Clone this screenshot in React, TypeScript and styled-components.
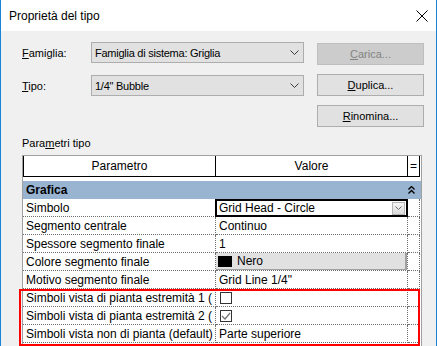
import styled, { createGlobalStyle } from "styled-components";

const GlobalStyle = createGlobalStyle`
  html, body {
    margin: 0;
    padding: 0;
    width: 437px;
    height: 346px;
    overflow: hidden;
    background: #ffffff;
  }
  body {
    font-family: "Liberation Sans", Arial, sans-serif;
    color: #000000;
  }
`;

type Param = {
  name: string;
  kind: "text" | "select" | "color" | "check";
  value?: string;
  checked?: boolean;
};

const params: Param[] = [
  { name: "Simbolo", kind: "select", value: "Grid Head - Circle" },
  { name: "Segmento centrale", kind: "text", value: "Continuo" },
  { name: "Spessore segmento finale", kind: "text", value: "1" },
  { name: "Colore segmento finale", kind: "color", value: "Nero" },
  { name: "Motivo segmento finale", kind: "text", value: "Grid Line 1/4\"" },
  { name: "Simboli vista di pianta estremità 1 (", kind: "check", checked: false },
  { name: "Simboli vista di pianta estremità 2 (", kind: "check", checked: true },
  { name: "Simboli vista non di pianta (default)", kind: "text", value: "Parte superiore" },
];

function Chevron() {
  return (
    <svg width="9" height="5" viewBox="0 0 9 5">
      <polyline points="0.5,0.5 4.5,4.5 8.5,0.5" fill="none" stroke="#3c3c3c" strokeWidth="1" />
    </svg>
  );
}

export default function App() {
  return (
    <>
      <GlobalStyle />
      <Window>
        <TitleBar>
          <Title>Proprietà del tipo</Title>
          <svg width="12" height="12" viewBox="0 0 12 12">
            <path d="M0.5 0.5 L11.5 11.5 M11.5 0.5 L0.5 11.5" stroke="#000" strokeWidth="1" />
          </svg>
        </TitleBar>
        <Body>
          <TopArea>
            <FieldColumn>
              <FieldRow>
                <FieldLabel>
                  <u>F</u>amiglia:
                </FieldLabel>
                <Combo>
                  <span>Famiglia di sistema: Griglia</span>
                  <Chevron />
                </Combo>
              </FieldRow>
              <FieldRow>
                <FieldLabel>
                  <u>T</u>ipo:
                </FieldLabel>
                <Combo>
                  <span>1/4" Bubble</span>
                  <Chevron />
                </Combo>
              </FieldRow>
            </FieldColumn>
            <ButtonColumn>
              <DialogButton $disabled>
                <u>C</u>arica...
              </DialogButton>
              <DialogButton>
                <u>D</u>uplica...
              </DialogButton>
              <DialogButton>
                <u>R</u>inomina...
              </DialogButton>
            </ButtonColumn>
          </TopArea>

          <SectionLabel>
            Para<u>m</u>etri tipo
          </SectionLabel>

          <Table>
            <HeaderRow>
              <HeaderCell>Parametro</HeaderCell>
              <HeaderCell>Valore</HeaderCell>
              <HeaderCell>=</HeaderCell>
            </HeaderRow>
            <GroupRow>
              <span>Grafica</span>
              <svg width="7" height="8" viewBox="0 0 7 8">
                <polyline points="0.5,3.5 3.5,0.5 6.5,3.5" fill="none" stroke="#000" strokeWidth="1.4" />
                <polyline points="0.5,7.5 3.5,4.5 6.5,7.5" fill="none" stroke="#000" strokeWidth="1.4" />
              </svg>
            </GroupRow>
            {params.map((p) => (
              <ParamRow key={p.name}>
                <NameCell>{p.name}</NameCell>
                <ValueCell>
                  {p.kind === "text" && <CellText>{p.value}</CellText>}
                  {p.kind === "select" && (
                    <SelectBox>
                      <span>{p.value}</span>
                      <DropButton>
                        <svg width="7" height="4" viewBox="0 0 7 4">
                          <polyline points="0.5,0.5 3.5,3.5 6.5,0.5" fill="none" stroke="#6e6e6e" strokeWidth="1" />
                        </svg>
                      </DropButton>
                    </SelectBox>
                  )}
                  {p.kind === "color" && (
                    <ColorButton>
                      <Swatch />
                      <span>{p.value}</span>
                    </ColorButton>
                  )}
                  {p.kind === "check" && (
                    <CheckBox>
                      {p.checked && (
                        <svg width="10" height="10" viewBox="0 0 10 10">
                          <polyline points="1,5 4,8 9,2" fill="none" stroke="#707070" strokeWidth="1.2" />
                        </svg>
                      )}
                    </CheckBox>
                  )}
                </ValueCell>
                <SpareCell />
              </ParamRow>
            ))}
          </Table>
        </Body>
        <Highlight />
      </Window>
    </>
  );
}

const Window = styled.div`
  position: relative;
  width: 437px;
  height: 346px;
  box-sizing: border-box;
  border-left: 1px solid #1883d7;
  border-right: 1px solid #1883d7;
  background: #f0f0f0;
  display: flex;
  flex-direction: column;
  overflow: hidden;
`;

const TitleBar = styled.div`
  flex: none;
  height: 31px;
  background: #ffffff;
  display: flex;
  align-items: center;
  justify-content: space-between;
  padding: 0 8px 0 8px;
`;

const Title = styled.div`
  font-size: 12px;
  line-height: 16px;
`;

const Body = styled.div`
  flex: 1;
  display: flex;
  flex-direction: column;
  padding: 11px 0 0 21px;
  min-height: 0;
  font-size: 11px;
`;

const TopArea = styled.div`
  display: flex;
  align-items: flex-start;
  gap: 13px;
`;

const FieldColumn = styled.div`
  display: flex;
  flex-direction: column;
  gap: 12px;
`;

const FieldRow = styled.div`
  display: flex;
  align-items: center;
`;

const FieldLabel = styled.div`
  width: 69px;
  line-height: 14px;
`;

const Combo = styled.div`
  width: 213px;
  height: 21px;
  box-sizing: border-box;
  border: 1px solid #adadad;
  background: #e1e1e1;
  display: flex;
  align-items: center;
  justify-content: space-between;
  padding: 0 4px 0 3px;
  letter-spacing: -0.25px;
`;

const ButtonColumn = styled.div`
  display: flex;
  flex-direction: column;
  gap: 9px;
  margin-top: 1px;
`;

const DialogButton = styled.div<{ $disabled?: boolean }>`
  width: 107px;
  height: 22px;
  box-sizing: border-box;
  display: flex;
  align-items: center;
  justify-content: center;
  border: 1px solid ${(p) => (p.$disabled ? "#bfbfbf" : "#adadad")};
  background: ${(p) => (p.$disabled ? "#cccccc" : "#e1e1e1")};
  color: ${(p) => (p.$disabled ? "#838383" : "#000000")};
`;

const SectionLabel = styled.div`
  margin-top: 8px;
  line-height: 16px;
`;

const Table = styled.div`
  margin-top: 4px;
  width: 400px;
  flex: 1;
  box-sizing: border-box;
  border: 1px solid #a0a0a0;
  border-bottom: none;
  background: #ffffff;
  font-size: 12px;
`;

const HeaderRow = styled.div`
  display: grid;
  grid-template-columns: 192px 192px 12px;
  height: 21px;
  border-left: 1px solid #000000;
  width: fit-content;
`;

const HeaderCell = styled.div`
  box-sizing: border-box;
  border-right: 1px solid #000000;
  border-bottom: 1px solid #000000;
  display: flex;
  align-items: center;
  justify-content: center;
`;

const GroupRow = styled.div`
  margin-top: 4px;
  height: 18px;
  background: #99b4d1;
  display: flex;
  align-items: center;
  justify-content: space-between;
  padding: 0 6px 0 3px;
  font-weight: bold;
`;

const ParamRow = styled.div`
  display: grid;
  grid-template-columns: 193px 192px 12px;
  height: 18px;
`;

const BaseCell = styled.div`
  box-sizing: border-box;
  border-right: 1px dotted #6e6e6e;
  border-bottom: 1px dotted #6e6e6e;
  display: flex;
  align-items: center;
  min-width: 0;
`;

const NameCell = styled(BaseCell)`
  padding-left: 3px;
  white-space: nowrap;
  overflow: hidden;
`;

const ValueCell = styled(BaseCell)`
  position: relative;
`;

const SpareCell = styled(BaseCell)``;

const CellText = styled.span`
  padding-left: 3px;
  white-space: nowrap;
`;

const SelectBox = styled.div`
  position: absolute;
  left: -1px;
  top: 0;
  width: 193px;
  height: 18px;
  box-sizing: border-box;
  border: 2px solid #000000;
  background: #ffffff;
  display: flex;
  align-items: center;
  justify-content: space-between;
  padding: 0 1px 0 2px;
  z-index: 1;
`;

const DropButton = styled.div`
  width: 13px;
  height: 13px;
  box-sizing: border-box;
  border: 1px solid #b4b4b4;
  background: linear-gradient(#f6f6f6, #dadada);
  display: flex;
  align-items: center;
  justify-content: center;
`;

const ColorButton = styled.div`
  flex: 1;
  align-self: stretch;
  box-sizing: border-box;
  background: #e1e1e1;
  border-right: 2px solid #a0a0a0;
  border-bottom: 1px solid #a0a0a0;
  display: flex;
  align-items: center;
  gap: 5px;
  padding-left: 2px;
`;

const Swatch = styled.div`
  width: 14px;
  height: 11px;
  background: #000000;
`;

const CheckBox = styled.div`
  margin-left: 4px;
  width: 12px;
  height: 12px;
  box-sizing: border-box;
  border: 1px solid #333333;
  background: #ffffff;
  display: flex;
  align-items: center;
  justify-content: center;
`;

const Highlight = styled.div`
  position: absolute;
  left: 18px;
  top: 289px;
  width: 401px;
  height: 57px;
  box-sizing: border-box;
  border: 2px solid #ff0000;
  pointer-events: none;
`;
